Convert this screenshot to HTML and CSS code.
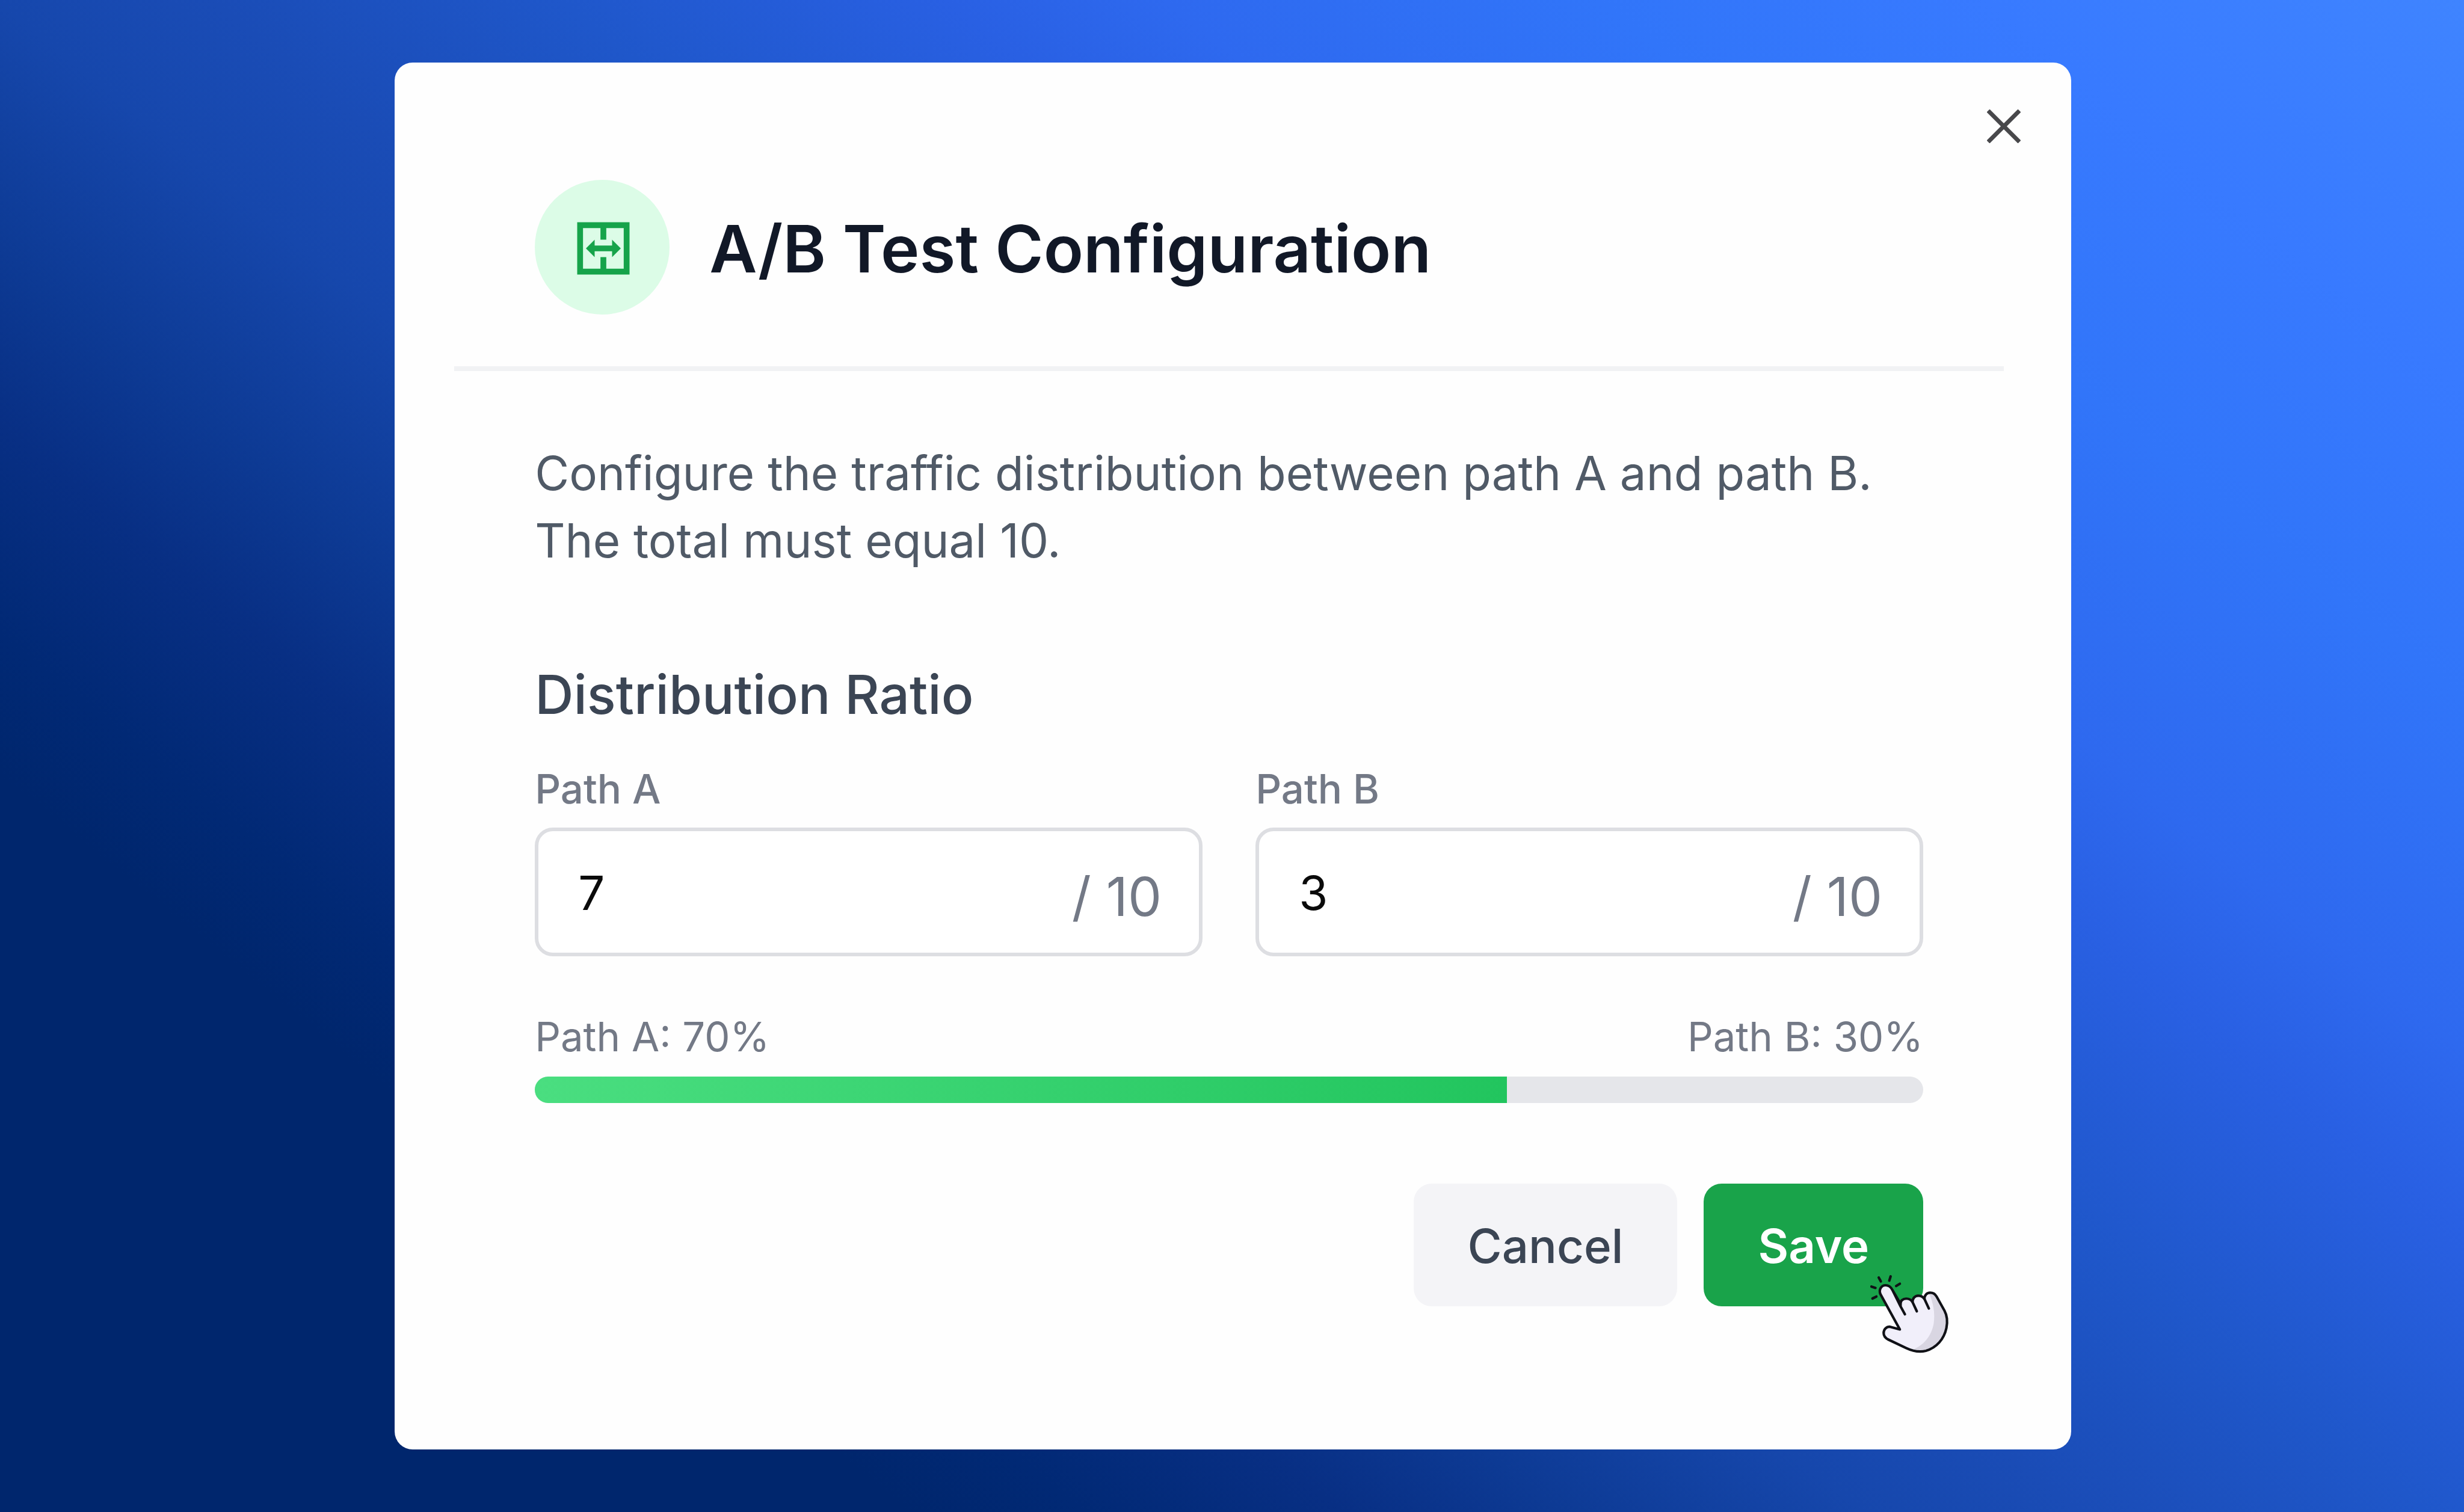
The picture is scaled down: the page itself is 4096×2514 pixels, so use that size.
FILE: index.html
```html
<!DOCTYPE html>
<html lang="en">
<head>
<meta charset="utf-8">
<meta name="viewport" content="width=device-width, initial-scale=1">
<title>A/B Test Configuration</title>
<link rel="stylesheet" href="styles.css">
</head>
<body class="backdrop">
<main class="dialog" role="dialog" aria-labelledby="dialog-title">
  <button class="close" type="button" aria-label="Close">
    <svg class="close-icon" viewBox="0 0 56 56" fill="none" stroke="currentColor" stroke-width="7" aria-hidden="true"><path d="M2 2l52 52M54 2L2 54"/></svg>
  </button>
  <header class="dialog-header">
    <span class="badge">
      <svg class="badge-icon" viewBox="0 0 24 24" fill="currentColor" aria-hidden="true"><path d="M21 3V21H3V3H21ZM11 5H5V19H11V15H13V19H19V5H13V9H11V5ZM15 9L18 12L15 15V13H9V15L6 12L9 9V11H15V9Z"/></svg>
    </span>
    <h1 class="title" id="dialog-title">A/B Test Configuration</h1>
  </header>
  <form class="dialog-body">
    <p class="intro">Configure the traffic distribution between path A and path B. The total must equal 10.</p>
    <fieldset class="ratio">
      <legend class="ratio-title">Distribution Ratio</legend>
      <div class="fields">
        <div class="field">
          <label class="field-label" for="path-a">Path A</label>
          <div class="field-box">
            <input class="field-input" id="path-a" type="text" inputmode="numeric" value="7">
            <span class="field-suffix">/ 10</span>
          </div>
        </div>
        <div class="field">
          <label class="field-label" for="path-b">Path B</label>
          <div class="field-box">
            <input class="field-input" id="path-b" type="text" inputmode="numeric" value="3">
            <span class="field-suffix">/ 10</span>
          </div>
        </div>
      </div>
    </fieldset>
    <div class="split">
      <div class="split-labels"><span>Path A: 70%</span><span>Path B: 30%</span></div>
      <div class="split-track"><div class="split-fill" style="width: 70%"></div></div>
    </div>
    <footer class="actions">
      <button class="button button-cancel" type="button">Cancel</button>
      <div class="save-wrap">
        <button class="button button-save" type="submit">Save</button>
        <svg class="pointer" viewBox="0 0 840 720" aria-hidden="true">
          <path class="pointer-hand" d="M348 479L218 243C203 208 226 182 252 182C273 182 287 194 297 212L353 308C350 285 370 272 391 272C413 272 427 284 434 297C432 270 449 252 472 252C494 252 507 263 514 276C512 249 529 232 552 232C573 232 586 242 595 258L648 353C668 390 669 430 661 470C645 545 594 603 523 623C477 634 432 624 390 604L270 547C247 536 239 523 239 503C240 478 257 461 281 461Z"/>
          <path class="pointer-shade" d="M546 241C566 239 579 249 587 263L640 357C660 393 661 430 653 467C637 539 589 595 521 614C492 621 465 619 442 611C510 584 559 523 575 444C587 370 572 300 546 241Z"/>
          <path class="pointer-line" d="M348 479L218 243C203 208 226 182 252 182C273 182 287 194 297 212L353 308C350 285 370 272 391 272C413 272 427 284 434 297C432 270 449 252 472 252C494 252 507 263 514 276C512 249 529 232 552 232C573 232 586 242 595 258L648 353C668 390 669 430 661 470C645 545 594 603 523 623C477 634 432 624 390 604L270 547C247 536 239 523 239 503C240 478 257 461 281 461ZM353 308V325L382 377M353 325L297 212M434 297L462 357M514 276L543 338M206 130L220 156M286 122L277 151M157 191L184 200M323 187L348 172M164 271L190 258"/>
        </svg>
      </div>
    </footer>
  </form>
</main>
</body>
</html>
```
FILE: styles.css
```css
*, *::before, *::after { box-sizing: border-box; }

.backdrop {
  display: grid;
  min-height: 100vh;
  margin: 0;
  padding: 104px 15.94% 104px 16.02%;
  font-family: Inter, "Liberation Sans", sans-serif;
  color: #111827;
  background: linear-gradient(219deg, #3f84ff 0%, #387aff 11%, #3175f9 20%, #2e69ef 30%, #2960e3 35%, #1f57ca 44%, #1a4cb6 52%, #1647ac 57%, #0d3a94 64%, #082f84 69%, #012975 75%, #00266d 79%);
}

.dialog {
  position: relative;
  min-width: 0;
  padding: 195px 112px 0 99px;
  background: #fefefe;
  border-radius: 30px;
}

.close {
  position: absolute;
  top: 58px;
  right: 64px;
  display: grid;
  place-items: center;
  width: 96px;
  height: 96px;
  padding: 0;
  border: 0;
  background: none;
  color: #48484b;
}
.close-icon { width: 56px; height: 56px; }

.dialog-header {
  display: flex;
  align-items: center;
  gap: 66px;
  padding: 0 134px 86px;
  border-bottom: 8px solid #f1f2f4;
}
.badge {
  display: grid;
  place-items: center;
  width: 224px;
  height: 224px;
  padding: 4px 0 0 4px;
  border-radius: 50%;
  background: #dcfce7;
  color: #16a34a;
}
.badge-icon { width: 116px; height: 116px; }
.title { margin: 0; padding-top: 4px; font-size: 109px; line-height: 136px; font-weight: 600; }

.dialog-body { padding: 114px 134px 0; }
.intro { margin: 0; font-size: 78px; line-height: 112px; color: #505a67; }

.ratio { min-width: 0; margin: 136px 0 0; padding: 0; border: 0; }
.ratio-title { padding: 0; font-size: 89px; line-height: 128px; font-weight: 500; color: #3b4554; }
.fields {
  display: grid;
  grid-template-columns: repeat(2, minmax(0, 1fr));
  gap: 88px;
  padding-top: 47px;
}
.field-label { display: block; margin-bottom: 18px; font-size: 67px; line-height: 92px; font-weight: 500; color: #737986; }
.field-box {
  display: flex;
  align-items: center;
  height: 214px;
  padding: 4px 62px 0 66px;
  border: 6px solid #dddee2;
  border-radius: 30px;
  background: #fff;
}
.field-input {
  flex: 1;
  width: 100%;
  min-width: 0;
  padding: 0;
  border: 0;
  outline: 0;
  background: none;
  font: inherit;
  font-size: 78px;
  line-height: 112px;
  color: #0a0a0a;
}
.field-suffix { flex: none; padding-top: 12px; font-size: 89px; line-height: 112px; color: #737986; }

.split { margin-top: 88px; }
.split-labels { display: flex; justify-content: space-between; font-size: 67px; line-height: 92px; color: #737986; }
.split-track { height: 44px; margin-top: 20px; overflow: hidden; border-radius: 22px; background: #e5e6ea; }
.split-fill { height: 100%; background: linear-gradient(90deg, #4ade80, #22c55e); }

.actions { display: flex; justify-content: flex-end; gap: 44px; margin-top: 134px; }
.button {
  display: block;
  height: 204px;
  padding: 4px 90px 0;
  border: 0;
  border-radius: 30px;
  font: inherit;
  font-size: 78px;
  line-height: 112px;
  font-weight: 500;
}
.button-cancel { background: #f4f4f7; color: #3b4554; }
.button-save { background: #19a34a; color: #fff; font-weight: 600; }

.save-wrap { position: relative; }
.pointer {
  position: absolute;
  right: -83px;
  bottom: -98px;
  width: 208px;
  height: 178px;
  pointer-events: none;
}
.pointer-hand { fill: #f1effa; }
.pointer-shade { fill: #d9d6e2; }
.pointer-line { fill: none; stroke: #101116; stroke-width: 17; stroke-linecap: round; stroke-linejoin: round; }
```
